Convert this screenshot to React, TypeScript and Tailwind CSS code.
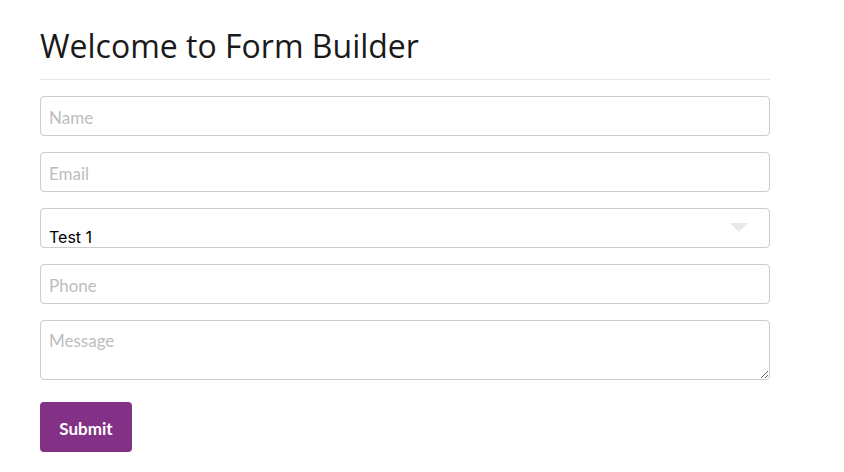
import React from "react";

export default function App() {
  const inputCls =
    "block w-full h-[40px] rounded-[4px] border border-[#cccccc] bg-white px-[8px] pt-[2px] text-[17px] text-black outline-none placeholder:text-[#bdbdbd] [font-family:'Lato','Noto_Sans',sans-serif]";
  return (
    <div className="min-h-[472px] w-[844px] bg-white pl-[40px] pt-[27px] [font-family:'Open_Sans',sans-serif]">
      <div className="w-[730px]">
        <h1 className="text-[32px] leading-[38px] font-normal text-[#1a1a1a] [font-family:'Open_Sans',sans-serif]">
          Welcome to Form Builder
        </h1>
        <div className="mt-[14px] h-px w-full bg-[#e6e6e6]" />
        <form className="mt-[16px] flex flex-col gap-[16px]" onSubmit={(e) => e.preventDefault()}>
          <input className={inputCls} placeholder="Name" />
          <input className={inputCls} placeholder="Email" />
          <div className="relative h-[40px] w-full rounded-[4px] border border-[#cccccc] bg-white">
            <span className="absolute left-[8px] top-[18px] text-[16px] leading-[20px] text-black [font-family:'Inter',sans-serif]">
              Test 1
            </span>
            <svg
              className="absolute right-[21px] top-[14px]"
              width="18"
              height="10"
              viewBox="0 0 18 10"
            >
              <polygon points="0,0 18,0 9,9" fill="#e8e8e8" />
            </svg>
          </div>
          <input className={inputCls} placeholder="Phone" />
          <textarea
            className="block h-[60px] w-full resize-y rounded-[4px] border border-[#cccccc] bg-white px-[8px] pt-[10px] pb-[6px] text-[17px] leading-[20px] text-black outline-none placeholder:text-[#bdbdbd] [font-family:'Lato','Noto_Sans',sans-serif]"
            placeholder="Message"
          />
          <div className="pt-[6px]">
            <button
              type="submit"
              className="h-[50px] w-[92px] rounded-[4px] bg-[#833187] pt-[3px] text-[17px] font-bold text-white [font-family:'Lato',sans-serif]"
            >
              Submit
            </button>
          </div>
        </form>
      </div>
    </div>
  );
}
